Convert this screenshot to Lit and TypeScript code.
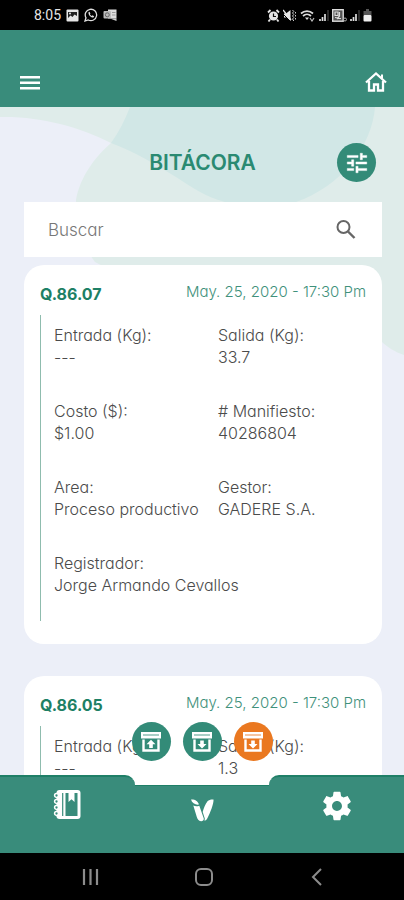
import { LitElement, html, svg, css } from "lit";
import { customElement, property } from "lit/decorators.js";

interface Field {
  label: string;
  value: string;
}

interface Entry {
  code: string;
  date: string;
  fields: Field[];
}

const ENTRIES: Entry[] = [
  {
    code: "Q.86.07",
    date: "May. 25, 2020 - 17:30 Pm",
    fields: [
      { label: "Entrada (Kg):", value: "---" },
      { label: "Salida (Kg):", value: "33.7" },
      { label: "Costo ($):", value: "$1.00" },
      { label: "# Manifiesto:", value: "40286804" },
      { label: "Area:", value: "Proceso productivo" },
      { label: "Gestor:", value: "GADERE S.A." },
      { label: "Registrador:", value: "Jorge Armando Cevallos" },
    ],
  },
  {
    code: "Q.86.05",
    date: "May. 25, 2020 - 17:30 Pm",
    fields: [
      { label: "Entrada (Kg):", value: "---" },
      { label: "Salida (Kg):", value: "1.3" },
    ],
  },
];

@customElement("status-bar")
export class StatusBar extends LitElement {
  static styles = css`
    :host {
      display: flex;
      align-items: center;
      justify-content: space-between;
      height: 30px;
      flex: none;
      padding: 0 32px 0 34px;
      background: #000;
      color: #e6e6e6;
      font: 400 14px/16px Roboto, sans-serif;
    }
    .group {
      display: flex;
      align-items: center;
      gap: 5px;
    }
    .tight {
      gap: 3px;
    }
    svg {
      display: block;
    }
  `;

  render() {
    return html`
      <div class="group">
        <span>8:05</span>
        <svg width="13" height="13" viewBox="0 0 13 13" aria-hidden="true">
          <rect x="0.5" y="0.5" width="12" height="12" rx="1" fill="#e6e6e6" />
          <path d="M2 3h9v4L8.500 5.500 6.500 8 4.500 6.500 2 9z" fill="#222" />
          <circle cx="4" cy="4.500" r="1" fill="#e6e6e6" />
        </svg>
        <svg width="14" height="14" viewBox="0 0 14 14" aria-hidden="true">
          <path d="M1 13l1-3.200A5.700 5.700 0 1 1 4.300 12z" fill="none" stroke="#e0e0e0" stroke-width="1.300" />
          <path d="M4.500 4.300l1-.6.9 1.700-.5.8c.4.8 1 1.300 1.800 1.700l.8-.6 1.600.9-.4 1.100C8 10.500 4 7.500 4.500 4.300z" fill="#e0e0e0" />
        </svg>
        <svg width="14" height="12" viewBox="0 0 14 12" aria-hidden="true">
          <rect x="5" y="0.500" width="8.500" height="9" fill="#ddd" />
          <rect x="0.500" y="2" width="7.500" height="7.500" rx="1" fill="#bbb" />
          <circle cx="4.300" cy="5.800" r="2" fill="none" stroke="#666" />
          <path d="M7 9.500h6.500V12z" fill="#ccc" />
          <path d="M9 3.500h3.500M9 6h3.500" stroke="#999" />
        </svg>
      </div>
      <div class="group tight">
        <svg width="13" height="13" viewBox="0 0 13 13" aria-hidden="true">
          <circle cx="6.500" cy="7" r="4.600" fill="#e6e6e6" />
          <path d="M1 3.500L3.500 1M12 3.500L9.500 1M3 10.500L1.500 12.500M10 10.500l1.500 2" stroke="#e6e6e6" stroke-width="1.800" />
          <path d="M6.500 4.500V7.500H9" fill="none" stroke="#111" stroke-width="1.200" />
        </svg>
        <svg width="14" height="13" viewBox="0 0 14 13" aria-hidden="true">
          <path d="M1 4.500h2L7.500 1v11L3 8.500H1z" fill="#e6e6e6" />
          <path d="M1 6l6 6" stroke="#000" stroke-width="1" />
          <path d="M0 1l8 10" stroke="#e6e6e6" stroke-width="1.400" />
          <path d="M9.500 1l1.300 1.500L9.500 4l1.300 1.500L9.500 7l1.300 1.500L9.500 10l1.300 2M12.500 3v1.500M12.500 6v1.500M12.500 9v1.500" fill="none" stroke="#ccc" />
        </svg>
        <svg width="16" height="13" viewBox="0 0 16 13" aria-hidden="true">
          <path d="M1 4.500a9 9 0 0 1 12 0M3 7a6 6 0 0 1 8 0" fill="none" stroke="#ddd" stroke-width="1.700" />
          <path d="M5 8.500h4L7 11z" fill="#ddd" />
          <path d="M10 9l2 3 2-3" fill="none" stroke="#bbb" stroke-width="1.200" />
        </svg>
        ${this.signal()}
        <svg width="15" height="13" viewBox="0 0 15 13" aria-hidden="true">
          <rect x="0.700" y="0.700" width="10.500" height="11.500" fill="#555" stroke="#ddd" stroke-width="1.400" />
          <path d="M3 3h3v3.500H3zM7.500 3v4L5 10M3 8.500l6 1" fill="none" stroke="#ddd" stroke-width="1.200" />
          <circle cx="13" cy="10.500" r="1.500" fill="none" stroke="#aaa" />
        </svg>
        ${this.signal()}
        <svg width="9" height="13" viewBox="0 0 9 13" aria-hidden="true">
          <path d="M3 0h3v2h2.500v4h-8V2H3z" fill="#555" />
          <rect x="0.500" y="6" width="8" height="6.500" rx="1" fill="#eee" />
        </svg>
      </div>
    `;
  }

  private signal() {
    return html`<svg width="10" height="13" viewBox="0 0 10 13" aria-hidden="true">
      <path d="M1 12v-2M3.500 12V8M6 12V5" stroke="#ddd" stroke-width="1.700" />
      <path d="M9 12V1" stroke="#555" stroke-width="1" />
    </svg>`;
  }
}

@customElement("log-card")
export class LogCard extends LitElement {
  @property({ attribute: false }) entry!: Entry;

  static styles = css`
    :host {
      display: block;
      border-radius: 20px;
      padding: 0 0 23px 16px;
      background: #fff;
    }
    .head {
      display: flex;
      align-items: center;
      justify-content: space-between;
      height: 50px;
      padding-right: 16px;
      padding-top: 4px;
      box-sizing: border-box;
      color: #1d8065;
    }
    .code {
      margin: 0;
      padding-top: 4px;
      font-size: 16px;
      line-height: 24px;
      font-weight: 700;
    }
    .date {
      font-size: 15px;
      line-height: 24px;
      color: #3f917b;
    }
    .fields {
      display: grid;
      grid-template-columns: repeat(2, minmax(0, 1fr));
      margin: 0;
      padding: 0 0 2px 13px;
      border-left: 1px solid #8fbcae;
    }
    .field {
      padding: 9px 0 23px;
      white-space: nowrap;
      font-size: 16px;
      line-height: 22px;
      color: #4b4b4b;
    }
    dt,
    dd {
      margin: 0;
    }
  `;

  render() {
    const { code, date, fields } = this.entry;
    return html`
      <div class="head">
        <h2 class="code">${code}</h2>
        <time class="date">${date}</time>
      </div>
      <dl class="fields">
        ${fields.map(
          (f) => html`<div class="field">
            <dt>${f.label}</dt>
            <dd>${f.value}</dd>
          </div>`
        )}
      </dl>
    `;
  }
}

const archiveIcon = (up: boolean) => html`<svg width="22" height="22" viewBox="0 0 22 22" aria-hidden="true">
  <path d="M1 1h20v6.500H1z" fill="#fff" />
  <path d="M3 4h16" stroke="currentColor" stroke-width="1.400" opacity="0.600" />
  <path d="M3.500 8.500v11h15v-11" fill="none" stroke="#fff" stroke-width="2.400" />
  ${up
    ? svg`<path d="M11 8.700l4.500 4.500h-2.700V17H9.200v-3.800H6.500z" fill="#fff" />`
    : svg`<path d="M11 17.500l4.500-4.500h-2.700V9.500H9.200V13H6.500z" fill="#fff" />`}
</svg>`;

@customElement("app-root")
export class AppRoot extends LitElement {
  static styles = css`
    :host {
      display: flex;
      flex-direction: column;
      height: 100vh;
      overflow: hidden;
      font-family: Inter, "Open Sans", sans-serif;
      font-weight: 300;
      font-feature-settings: "cv11";
    }
    button {
      display: flex;
      align-items: center;
      justify-content: center;
      border: 0;
      padding: 0;
      background: none;
      color: inherit;
      font: inherit;
    }
    a {
      color: inherit;
    }
    svg {
      display: block;
    }
    .top {
      display: flex;
      flex: none;
      align-items: center;
      justify-content: space-between;
      height: 77px;
      box-sizing: border-box;
      padding: 28px 16px 0 18px;
      background: #398c7b;
      color: #fff;
    }
    .main {
      position: relative;
      flex: 1;
      min-height: 0;
      overflow: hidden;
      background: #eceff8;
    }
    .blobs {
      position: absolute;
      top: 0;
      left: 0;
      width: 100%;
    }
    .content {
      position: relative;
      padding: 0 22px 0 24px;
    }
    .heading {
      display: grid;
      grid-template-columns: 40px 1fr 40px;
      align-items: center;
      height: 95px;
      padding: 16px 5px 0 4px;
      box-sizing: border-box;
    }
    .title {
      grid-column: 2;
      margin: 0;
      text-align: center;
      font-size: 21px;
      line-height: 28px;
      font-weight: 600;
      color: #2a8a72;
    }
    .round {
      width: 39px;
      height: 39px;
      border-radius: 50%;
      background: #338b78;
      color: #338b78;
    }
    .orange {
      background: #ea7820;
      color: #ea7820;
    }
    .search {
      display: flex;
      align-items: center;
      height: 55px;
      padding: 0 24px;
      background: #fff;
      color: #666;
    }
    .search input {
      flex: 1;
      min-width: 0;
      border: 0;
      padding: 0;
      outline: 0;
      background: none;
      font: inherit;
      font-size: 17px;
      line-height: 24px;
      font-feature-settings: inherit;
      color: #333;
    }
    .search input::placeholder {
      color: #777;
      opacity: 1;
    }
    .list {
      display: flex;
      flex-direction: column;
      gap: 32px;
      margin-top: 8px;
    }
    .bottom {
      position: relative;
      display: flex;
      flex: none;
      align-items: flex-end;
      margin-top: -10px;
      color: #fff;
    }
    .tab {
      display: flex;
      flex: 1;
      align-items: flex-start;
      justify-content: center;
      height: 78px;
      box-sizing: border-box;
      padding-top: 12px;
      border-top: 2px solid #1f7f67;
      background: #398c7b;
    }
    .left {
      border-top-right-radius: 10px;
    }
    .right {
      border-top-left-radius: 10px;
    }
    .middle {
      height: 68px;
      border-top-width: 1px;
    }
    .actions {
      position: absolute;
      left: 0;
      right: 0;
      bottom: 100%;
      display: flex;
      justify-content: center;
      gap: 12px;
      padding-bottom: 14px;
    }
    .system {
      display: flex;
      flex: none;
      align-items: center;
      justify-content: space-between;
      height: 47px;
      padding: 0 76px;
      background: #000;
      color: #8c8c8c;
    }
  `;

  render() {
    return html`
      <status-bar></status-bar>
      <header class="top">
        <button aria-label="Menú">
          <svg width="24" height="24" viewBox="0 0 24 24" fill="currentColor" aria-hidden="true">
            <path d="M2 5h20v2.500H2zM2 10.500h20V13H2zM2 16h20v2.500H2z" />
          </svg>
        </button>
        <button aria-label="Inicio">
          <svg width="24" height="24" viewBox="0 0 24 24" fill="none" stroke="currentColor" aria-hidden="true">
            <path d="M2 11.500L12 2.500l10 9" stroke-width="2.300" />
            <path d="M5 10v9.500h5v-6h4v6h5V10" stroke-width="2.300" />
            <path d="M18 3.500v4" stroke-width="2" />
          </svg>
        </button>
      </header>
      <main class="main">
        <svg class="blobs" viewBox="0 0 404 260" aria-hidden="true">
          <path
            d="M0 0H404V248C395 245 387 240 381 234C320 220 180 200 95 155C80 135 76 115 76 93C80 70 95 50 111 36C80 20 40 9 0 10Z"
            fill="#dfecea"
          />
          <path
            d="M130 0H375C372 40 340 80 296 95H225C205 90 190 79 176 70C155 57 135 45 111 36C119 25 125 13 130 0Z"
            fill="#d1e7e6"
          />
        </svg>
        <div class="content">
          <div class="heading">
            <h1 class="title">BITÁCORA</h1>
            <button class="round" aria-label="Filtros">
              <svg width="26" height="26" viewBox="0 0 24 24" fill="#fff" stroke="#fff" stroke-width="0.400" aria-hidden="true">
                <path
                  d="M3 17v2h6v-2H3zM3 5v2h10V5H3zm10 16v-2h8v-2h-8v-2h-2v6h2zM7 9v2H3v2h4v2h2V9H7zm14 4v-2H11v2h10zm-6-4h2V7h4V5h-4V3h-2v6z"
                />
              </svg>
            </button>
          </div>
          <div class="search">
            <input type="text" placeholder="Buscar" aria-label="Buscar" />
            <svg width="24" height="24" viewBox="0 0 24 24" fill="none" stroke="currentColor" stroke-width="2" aria-hidden="true">
              <circle cx="9.500" cy="9" r="6" />
              <path d="M14 13.500l6.500 6.500" stroke-width="2.400" />
            </svg>
          </div>
          <div class="list">${ENTRIES.map((e) => html`<log-card .entry=${e}></log-card>`)}</div>
        </div>
      </main>
      <nav class="bottom">
        <div class="actions">
          <button class="round" aria-label="Entrada">${archiveIcon(true)}</button>
          <button class="round" aria-label="Salida">${archiveIcon(false)}</button>
          <button class="round orange" aria-label="Salida pendiente">${archiveIcon(false)}</button>
        </div>
        <a class="tab left" href="#bitacora" aria-label="Bitácora">
          <svg width="30" height="32" viewBox="0 0 30 32" aria-hidden="true">
            <rect x="4.500" y="1" width="24" height="29" rx="3" fill="#fff" />
            <path d="M10.700 4v23M13.500 4H25.500v23H13.500z" fill="#398c7b" />
            <path d="M10.700 4v23" stroke="#398c7b" stroke-width="1.200" />
            <path d="M16.500 3h6v10l-3-2.700-3 2.700z" fill="#fff" />
            <g fill="#398c7b" stroke="#fff" stroke-width="1.500">
              <circle cx="4.500" cy="6.500" r="1.900" />
              <circle cx="4.500" cy="12.500" r="1.900" />
              <circle cx="4.500" cy="18.500" r="1.900" />
              <circle cx="4.500" cy="24.500" r="1.900" />
            </g>
          </svg>
        </a>
        <a class="tab middle" href="#inicio" aria-label="Inicio">
          <svg width="26" height="26" viewBox="0 0 26 26" fill="#fff" aria-hidden="true">
            <path d="M2 1.500C4.500 1 8.500 2 10 6.500C7 7.200 3 5.500 2 1.500Z" />
            <path d="M4.300 7.500C6 8.500 8.500 8.500 10.300 7.700L14.800 20.500C15 22.500 13.500 23.300 12 23.200C9.500 23 8.500 21 7.800 19Z" />
            <path d="M24.500 1.500C25 5 21 15.500 18.500 20C17.700 21.700 16.500 22.600 15.500 22.800L15.800 20.500L13.700 14C14.500 10.500 16.500 5.500 18.500 3.200C20 1.700 22.500 1.200 24.500 1.500Z" />
          </svg>
        </a>
        <a class="tab right" href="#ajustes" aria-label="Ajustes">
          <svg width="34" height="34" viewBox="0 0 24 24" fill="#fff" aria-hidden="true">
            <path
              d="M19.430 12.980c.04-.32.07-.64.07-.98s-.03-.66-.07-.98l2.110-1.650c.19-.15.24-.42.12-.64l-2-3.460c-.12-.22-.39-.3-.61-.22l-2.490 1c-.52-.4-1.080-.73-1.690-.98l-.38-2.650C14.460 2.180 14.250 2 14 2h-4c-.25 0-.46.18-.49.42l-.38 2.650c-.61.25-1.170.59-1.690.98l-2.490-1c-.23-.09-.49 0-.61.22l-2 3.460c-.13.22-.07.49.12.64l2.110 1.650c-.04.32-.07.65-.07.98s.03.66.07.98l-2.110 1.650c-.19.15-.24.42-.12.64l2 3.460c.12.22.39.3.61.22l2.490-1c.52.4 1.080.73 1.690.98l.38 2.650c.03.24.24.42.49.42h4c.25 0 .46-.18.49-.42l.38-2.650c.61-.25 1.170-.59 1.690-.98l2.490 1c.23.09.49 0 .61-.22l2-3.460c.12-.22.07-.49-.12-.64l-2.110-1.650zM12 15.500c-1.930 0-3.500-1.570-3.500-3.500s1.570-3.500 3.500-3.500 3.500 1.570 3.500 3.500-1.570 3.500-3.500 3.500z"
            />
          </svg>
        </a>
      </nav>
      <footer class="system">
        <button aria-label="Recientes">
          <svg width="28" height="24" viewBox="0 0 28 24" stroke="currentColor" stroke-width="2.200" aria-hidden="true">
            <path d="M8 4v16M14.500 4v16M21 4v16" />
          </svg>
        </button>
        <button aria-label="Pantalla de inicio">
          <svg width="24" height="24" viewBox="0 0 24 24" fill="none" stroke="currentColor" stroke-width="2" aria-hidden="true">
            <rect x="4" y="4" width="16" height="16" rx="5" />
          </svg>
        </button>
        <button aria-label="Atrás">
          <svg width="24" height="24" viewBox="0 0 24 24" fill="none" stroke="currentColor" stroke-width="2" aria-hidden="true">
            <path d="M17 4l-8 8 8 8" />
          </svg>
        </button>
      </footer>
    `;
  }
}
